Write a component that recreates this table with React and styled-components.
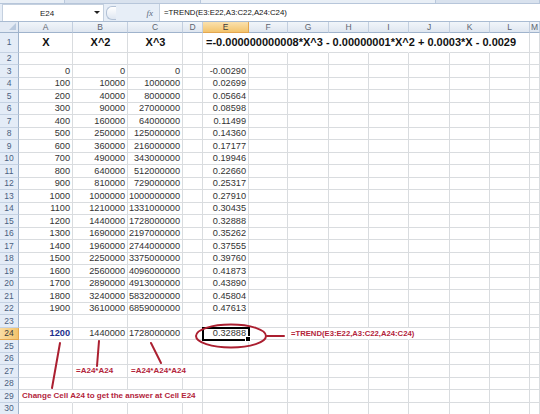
import React from 'react'
import styled, { createGlobalStyle } from 'styled-components'

const GlobalStyle = createGlobalStyle`
  html, body {
    margin: 0;
    padding: 0;
    background: #fff;
  }
`

const Page = styled.div`
  position: relative;
  width: 540px;
  height: 414px;
  overflow: hidden;
  background: #fff;
  font-family: "Liberation Sans", Arial, sans-serif;
`

const RibbonEdge = styled.div`
  display: flex;
  height: 4px;
  background: #dfe7f1;
  border-bottom: 1px solid #b7c6da;
  box-sizing: border-box;
`

const RibbonGroup = styled.div`
  width: ${p => p.$w}px;
  border-right: 1px solid #b9c8dc;
  background: ${p => (p.$light ? '#e9eff6' : '#d9e2ee')};
`

const FormulaBar = styled.div`
  display: flex;
  height: 18px;
  background: #e7eef7;
  border-bottom: 1px solid #a9bbd2;
  box-sizing: border-box;
`

const NameBox = styled.div`
  position: relative;
  width: 102px;
  margin-left: 2px;
  background: #fff;
  border: 1px solid #c4d0df;
  border-bottom: none;
  box-sizing: border-box;
  display: flex;
  align-items: center;
  justify-content: center;
  font-size: 8px;
  color: #222;
  padding-right: 12px;
`

const DropArrow = styled.span`
  position: absolute;
  right: 3px;
  top: 6px;
  width: 0;
  height: 0;
  border-left: 3px solid transparent;
  border-right: 3px solid transparent;
  border-top: 3px solid #222;
`

const Splitter = styled.div`
  width: 55px;
  display: flex;
  align-items: center;
  justify-content: space-between;
  padding: 0 6px 0 2px;
  box-sizing: border-box;
`

const Pill = styled.div`
  width: 9px;
  height: 12px;
  border-radius: 6px 0 0 6px;
  border: 1px solid #b3c2d6;
  border-right: none;
  background: linear-gradient(#ffffff, #dfe7f2);
`

const Fx = styled.span`
  font-family: "Liberation Serif", serif;
  font-style: italic;
  font-size: 9px;
  color: #5a6b80;
`

const FormulaInput = styled.div`
  flex: 1;
  background: #fff;
  border-left: 1px solid #c4d0df;
  display: flex;
  align-items: center;
  padding-left: 4px;
  font-size: 7.8px;
  color: #111;
  white-space: nowrap;
`

const Sheet = styled.div`
  display: grid;
  grid-template-columns: 19px 54px 55px 55px 20px 46px 39px 41px 40px 40px 41px 40px 40px 1fr;
  grid-template-rows: 11px 19.5px repeat(29, 12.5px);
`

const Corner = styled.div`
  position: relative;
  background: #e3eaf4;
  border-right: 1px solid #9fb3cc;
  border-bottom: 1px solid #9fb3cc;
  &::after {
    content: '';
    position: absolute;
    right: 2px;
    bottom: 2px;
    border-left: 7px solid transparent;
    border-bottom: 7px solid #b9c9de;
  }
`

const ColHead = styled.div`
  display: flex;
  align-items: center;
  justify-content: center;
  font-size: 8.5px;
  color: ${p => (p.$active ? '#3a3a3a' : '#5c6470')};
  background: ${p =>
    p.$active
      ? 'linear-gradient(#fae1ae, #f3c46d)'
      : 'linear-gradient(#f1f5fa, #dfe6f0)'};
  border-right: 1px solid ${p => (p.$active ? '#e3a64f' : '#c3cfdf')};
  border-bottom: 1px solid ${p => (p.$active ? '#e3a64f' : '#9fb3cc')};
`

const RowHead = styled.div`
  display: flex;
  align-items: center;
  justify-content: center;
  font-size: 8.5px;
  color: ${p => (p.$active ? '#3a3a3a' : '#4a5f80')};
  background: ${p => (p.$active ? 'linear-gradient(90deg, #f9dca3, #f3c46d)' : '#e4ecf7')};
  border-right: 1px solid ${p => (p.$active ? '#e3a64f' : '#9fb3cc')};
  border-bottom: 1px solid ${p => (p.$active ? '#e3a64f' : '#c5d2e3')};
`

const Cell = styled.div`
  position: relative;
  display: flex;
  align-items: center;
  justify-content: ${p => ({ left: 'flex-start', center: 'center', right: 'flex-end' }[p.$align] || 'flex-end')};
  padding: 0 2px 0 3px;
  white-space: nowrap;
  font-size: ${p => p.$size || 9.2}px;
  font-weight: ${p => (p.$bold ? 700 : 400)};
  color: ${p => p.$color || '#333'};
  border-right: 1px solid ${p => (p.$noRight ? 'transparent' : '#d9dcdf')};
  border-bottom: 1px solid #d9dcdf;
  min-width: 0;
  z-index: ${p => (p.$selected ? 2 : 1)};
  outline: ${p => (p.$selected ? '2px solid #000' : 'none')};
  outline-offset: -1px;
  &::after {
    content: '';
    display: ${p => (p.$selected ? 'block' : 'none')};
    position: absolute;
    right: -3px;
    bottom: -3px;
    width: 4px;
    height: 4px;
    background: #000;
    border: 1px solid #fff;
  }
`

const Overlay = styled.svg`
  position: absolute;
  left: 0;
  top: 0;
  pointer-events: none;
  z-index: 5;
`

const COLS = ['A', 'B', 'C', 'D', 'E', 'F', 'G', 'H', 'I', 'J', 'K', 'L', 'M']
const TREND = [
  '-0.00290', '0.02699', '0.05664', '0.08598', '0.11499', '0.14360', '0.17177',
  '0.19946', '0.22660', '0.25317', '0.27910', '0.30435', '0.32888', '0.35262',
  '0.37555', '0.39760', '0.41873', '0.43890', '0.45804', '0.47613',
]
const RED = '#b3243b'

const cells = {}
cells.A1 = { text: 'X', align: 'center', bold: true, size: 11, color: '#111' }
cells.B1 = { text: 'X^2', align: 'center', bold: true, size: 11, color: '#111' }
cells.C1 = { text: 'X^3', align: 'center', bold: true, size: 11, color: '#111' }
cells.E1 = {
  text: '=-0.000000000008*X^3 - 0.00000001*X^2 + 0.0003*X - 0.0029',
  align: 'left', bold: true, size: 11, color: '#111',
}
;['E', 'F', 'G', 'H', 'I', 'J', 'K'].forEach(c => { cells[c + '1'] = { ...(cells[c + '1'] || {}), noRight: true } })

TREND.forEach((t, i) => {
  const x = i * 100
  const r = i + 3
  cells['A' + r] = { text: String(x) }
  cells['B' + r] = { text: String(x * x) }
  cells['C' + r] = { text: String(x * x * x) }
  cells['E' + r] = { text: t }
})

cells.A24 = { text: '1200', bold: true, color: '#1c2f8c' }
cells.B24 = { text: '1440000' }
cells.C24 = { text: '1728000000' }
cells.E24 = { text: '0.32888', selected: true }
cells.G24 = { text: '=TREND(E3:E22,A3:C22,A24:C24)', align: 'left', bold: true, size: 7.7, color: RED, noRight: true }
cells.H24 = { noRight: true }
cells.I24 = { noRight: true }
cells.B27 = { text: '=A24*A24', align: 'left', bold: true, size: 8, color: RED }
cells.C27 = { text: '=A24*A24*A24', align: 'left', bold: true, size: 8, color: RED, noRight: true }
cells.A29 = { text: 'Change Cell A24 to get the answer at Cell E24', align: 'left', bold: true, size: 8, color: RED, noRight: true }
cells.B29 = { noRight: true }
cells.C29 = { noRight: true }

const rows = Array.from({ length: 30 }, (_, i) => i + 1)

export default function App() {
  return (
    <Page>
      <GlobalStyle />
      <RibbonEdge>
        <RibbonGroup $w={64} $light />
        <RibbonGroup $w={136} />
        <RibbonGroup $w={236} $light />
        <RibbonGroup $w={104} />
      </RibbonEdge>
      <FormulaBar>
        <NameBox>
          E24
          <DropArrow />
        </NameBox>
        <Splitter>
          <Pill />
          <Fx>fx</Fx>
        </Splitter>
        <FormulaInput>=TREND(E3:E22,A3:C22,A24:C24)</FormulaInput>
      </FormulaBar>
      <Sheet>
        <Corner />
        {COLS.map(c => (
          <ColHead key={c} $active={c === 'E'}>{c}</ColHead>
        ))}
        {rows.map(r => (
          <React.Fragment key={r}>
            <RowHead $active={r === 24}>{r}</RowHead>
            {COLS.map(c => {
              const d = cells[c + r] || {}
              return (
                <Cell
                  key={c}
                  $align={d.align}
                  $bold={d.bold}
                  $size={d.size}
                  $color={d.color}
                  $noRight={d.noRight}
                  $selected={d.selected}
                >
                  {d.text}
                </Cell>
              )
            })}
          </React.Fragment>
        ))}
      </Sheet>
      <Overlay width="540" height="414" viewBox="0 0 540 414">
        <g fill="none" stroke="#ab1f30" strokeWidth="2" strokeLinecap="round">
          <ellipse cx="231" cy="336" rx="35" ry="11.5" />
          <line x1="267" y1="336" x2="284" y2="336" />
          <line x1="60" y1="343" x2="52" y2="388" />
          <line x1="99" y1="341" x2="97" y2="366" />
          <line x1="151" y1="343" x2="161" y2="363" />
        </g>
      </Overlay>
    </Page>
  )
}
